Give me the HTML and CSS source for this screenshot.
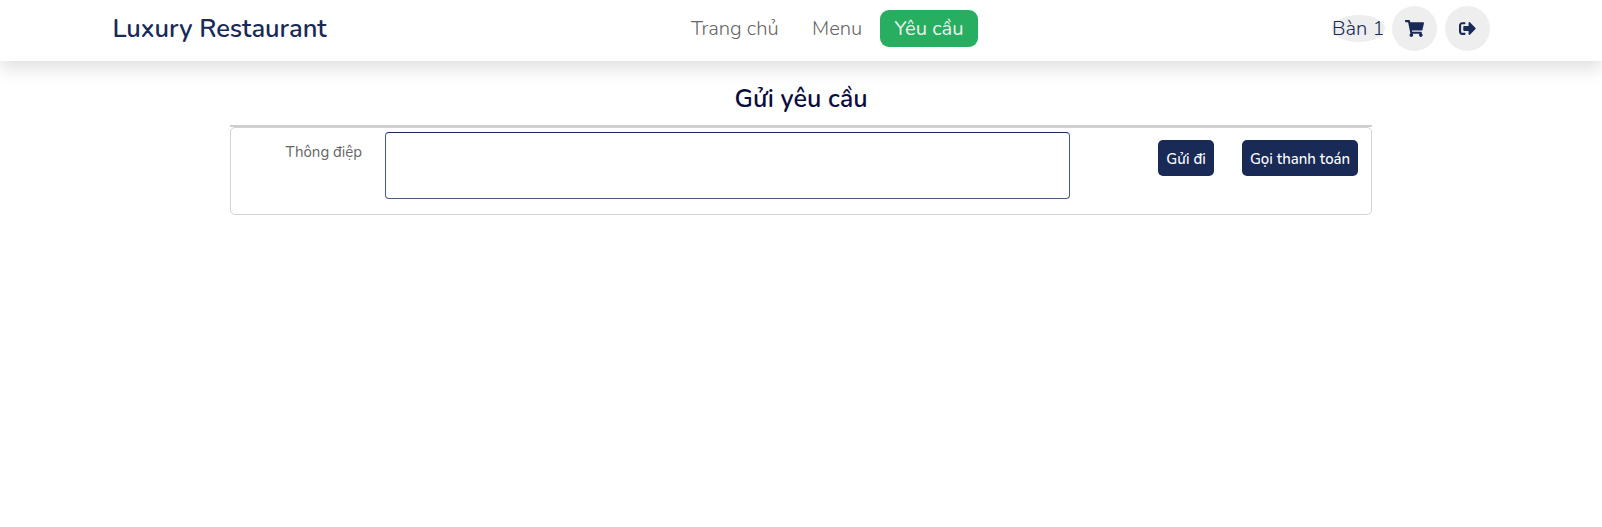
FILE: index.html
```html
<!DOCTYPE html>
<html lang="vi">
<head>
<meta charset="utf-8">
<title>Luxury Restaurant</title>
<link rel="stylesheet" href="styles.css">
</head>
<body>
<header class="header">
  <a class="brand"><span>Luxury Restaurant</span></a>
  <nav class="nav">
    <a class="home">Trang chủ</a>
    <a class="menu">Menu</a>
    <a class="active">Yêu cầu</a>
  </nav>
  <div class="icons">
    <a class="table">Bàn 1</a>
    <a class="round"><svg width="19" height="17" viewBox="0 0 576 512"><path d="M528.12 301.319l47.273-208C578.806 78.301 567.391 64 551.99 64H159.208l-9.166-44.81C147.758 8.021 137.93 0 126.529 0H24C10.745 0 0 10.745 0 24v16c0 13.255 10.745 24 24 24h69.883l70.248 343.435C147.325 417.1 136 435.222 136 456c0 30.928 25.072 56 56 56s56-25.072 56-56c0-15.674-6.447-29.835-16.824-40h209.647C430.447 426.165 424 440.326 424 456c0 30.928 25.072 56 56 56s56-25.072 56-56c0-22.172-12.888-41.332-31.579-50.405l5.517-24.276c3.413-15.018-8.002-29.319-23.403-29.319H218.117l-6.545-32h293.145c11.206 0 20.92-7.754 23.403-18.681z"/></svg></a>
    <a class="round"><svg width="17" height="17" viewBox="0 0 512 512"><path d="M497 273L329 441c-15 15-41 4.500-41-17v-96H152c-13.300 0-24-10.700-24-24v-96c0-13.300 10.700-24 24-24h136V88c0-21.400 25.900-32 41-17l168 168c9.300 9.400 9.300 24.600 0 34zM192 436v-40c0-6.600-5.400-12-12-12H96c-17.700 0-32-14.300-32-32V160c0-17.700 14.300-32 32-32h84c6.600 0 12-5.400 12-12V76c0-6.600-5.400-12-12-12H96c-53 0-96 43-96 96v192c0 53 43 96 96 96h84c6.600 0 12-5.400 12-12z"/></svg></a>
  </div>
</header>
<main class="content">
  <h1 class="title">Gửi yêu cầu</h1>
  <form class="card">
    <label class="label" for="message">Thông điệp</label>
    <textarea class="message" id="message"></textarea>
    <div class="buttons">
      <button type="button" class="send">Gửi đi</button>
      <button type="button" class="pay">Gọi thanh toán</button>
    </div>
  </form>
</main>
</body>
</html>
```
FILE: styles.css
```css
* { box-sizing: border-box; }
body { margin: 0; background: #fff; font-family: Nunito, "Open Sans", "Noto Sans", sans-serif; }
.header {
  height: 61px; padding: 0 112px; display: grid; grid-template-columns: 558px 1fr auto;
  background: #fff; box-shadow: 0 8px 16px rgba(0, 0, 0, .12); color: #192a56;
}
.brand { padding: 11px 0 0 .5px; font-size: 25.5px; line-height: 36px; font-weight: 600; white-space: nowrap; }
.nav { display: flex; align-items: flex-start; padding: 10px 0 0 21px; color: #666; font-size: 20.2px; line-height: 37px; font-weight: 300; white-space: nowrap; }
.home { width: 121px; }
.menu { width: 68px; }
.active { width: 98px; height: 37px; border-radius: 9px; background: #27ae60; color: #eee; font-weight: 400; text-align: center; }
.icons { display: flex; gap: 8px; padding-top: 6px; }
.table { width: 53px; height: 27px; margin: 9px -1px 0 0; border-radius: 50%; background: #eee; font-size: 20.2px; line-height: 27px; font-weight: 300; white-space: nowrap; }
.round { width: 45px; height: 45px; border-radius: 50%; background: #eee; display: flex; align-items: center; justify-content: center; }
.round svg { fill: #192a56; }
.content { width: 1142px; margin: 0 auto; padding-top: 17px; }
.title { height: 49px; margin: 0; border-bottom: 2px solid #cecece; text-align: center; font-size: 25.2px; line-height: 42px; font-weight: 600; color: #0b0b40; }
.card { height: 88px; border: 1px solid #d3d3d3; border-radius: 5px; display: flex; align-items: flex-start; padding: 4px 13px 0 0; }
.label { width: 154px; padding: 10px 23px 0 0; text-align: right; font-size: 15px; line-height: 21px; color: #666; white-space: nowrap; }
.message { width: 685px; height: 67px; border: 1px solid #4b5a80; border-top-color: #192a56; border-radius: 4px; resize: none; outline: 0; }
.buttons { display: flex; gap: 28px; margin: 8px 0 0 auto; }
.buttons button { height: 36px; padding: 1px 0 0; border: 0; border-radius: 5px; background: #192a56; color: #fff; font: 500 15px Nunito, "Open Sans", sans-serif; white-space: nowrap; }
.send { width: 56px; }
.pay { width: 116px; }
```
